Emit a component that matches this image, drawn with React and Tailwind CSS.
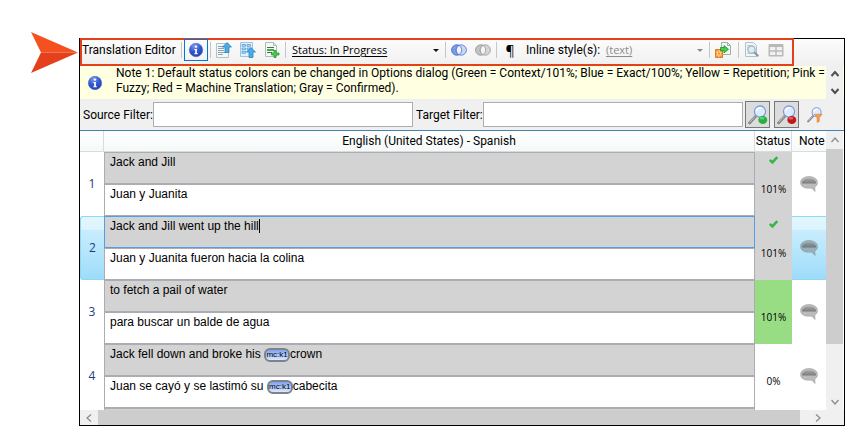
import React from "react";

const segments = [
  { id: 1, source: "Jack and Jill", target: "Juan y Juanita", score: "101%", checked: true, tone: "bg-[#d3d3d3]" },
  {
    id: 2,
    source: "Jack and Jill went up the hill",
    target: "Juan y Juanita fueron hacia la colina",
    score: "101%",
    checked: true,
    selected: true,
    tone: "bg-[#d3d3d3]",
  },
  { id: 3, source: "to fetch a pail of water", target: "para buscar un balde de agua", score: "101%", tone: "bg-[#98dd84]" },
  {
    id: 4,
    source: <>Jack fell down and broke his <Tag />crown</>,
    target: <>Juan se cayó y se lastimó su <Tag />cabecita</>,
    score: "0%",
    tone: "bg-white",
  },
];

function Tag() {
  return (
    <span className="inline-block h-[14px] w-[26px] rounded-[6px] border-2 border-[#7f8288] bg-gradient-to-b from-[#7fa5f2] to-[#dbe8ff] text-center align-middle text-[8px] leading-[10px]">
      mc:k1
    </span>
  );
}

function InfoIcon() {
  return (
    <svg className="size-4 shrink-0" viewBox="0 0 16 16" aria-hidden="true">
      <defs>
        <radialGradient id="info" cx="0.4" cy="0.2" r="0.9">
          <stop offset="0" stopColor="#7d9df0" />
          <stop offset="0.5" stopColor="#3157cf" />
          <stop offset="1" stopColor="#1b3fae" />
        </radialGradient>
      </defs>
      <circle cx="8" cy="8" r="6.7" fill="url(#info)" stroke="#4768c8" strokeWidth="0.6" />
      <circle cx="8" cy="4.6" r="1.2" fill="#fff" />
      <path d="M6.4 7h2.5v4.2h.9v1H6.3v-1h.9V8h-.8z" fill="#fff" />
    </svg>
  );
}

function UpArrow({ x, y }) {
  return (
    <path
      transform={`translate(${x} ${y})`}
      d="M4.5 0 9 4.6H6.5V10h-4V4.6H0z"
      fill="#45aee8"
      stroke="#2179b8"
      strokeWidth="0.7"
    />
  );
}

function MoveLinesIcon() {
  return (
    <svg className="size-4" viewBox="0 0 16 16" aria-hidden="true">
      <path d="M.5 1.5h12v14H.5z" fill="#f3f8f8" stroke="#b3c3c6" />
      <path d="M2 4.5h6M2 6.5h6M2 8.5h6M2 10.5h8M2 12.5h5" stroke="#8da2a9" />
      <UpArrow x={6.5} y={0.5} />
    </svg>
  );
}

function MoveBlocksIcon() {
  return (
    <svg className="size-4" viewBox="0 0 16 16" aria-hidden="true">
      <path d="M.5.5h12v14H.5z" fill="#e3f1fc" stroke="#9ec3df" />
      <path d="M2 2.5h3.5v1.8H2zM7 2.5h3.500v1.8H7zM2 6h3.5v1.8H2zM7 6h3.500v1.8H7zM2 9.5h3.5v1.8H2z" fill="#b9dcf6" stroke="#5b9dd4" strokeWidth="0.8" />
      <UpArrow x={6.5} y={5.5} />
    </svg>
  );
}

function AddPageIcon() {
  return (
    <svg className="size-4" viewBox="0 0 16 16" aria-hidden="true">
      <path d="M1.5.5h8l3 3v11h-11z" fill="#f4f9f6" stroke="#adbdb9" />
      <path d="M9.5.5v3h3" fill="#dfe9e6" stroke="#adbdb9" />
      <path d="M3 5.5h7M3 10.5h5" stroke="#4a6a56" />
      <path d="M3 8h7" stroke="#43ad52" strokeWidth="2" />
      <path d="M10 8.5h2v2.5h3v2h-3v2.5h-2V13H7.5v-2H10z" fill="#4bd44e" stroke="#178d24" strokeWidth="0.7" />
    </svg>
  );
}

function CirclesIcon({ fill, stroke, side }) {
  return (
    <svg className="h-3 w-4" viewBox="0 0 16 12" aria-hidden="true">
      <circle cx="5.8" cy="6" r="5.2" fill={fill} stroke={stroke} />
      <circle cx="10.2" cy="6" r="5.2" fill={side} stroke={stroke} strokeWidth="0.8" />
      <path d="M8 1.4a5.200 5.200 0 0 1 0 9.200 5.200 5.200 0 0 1 0-9.200z" fill="#f1f5fc" stroke={stroke} strokeWidth="0.8" />
    </svg>
  );
}

function ExportIcon() {
  return (
    <svg className="size-4" viewBox="0 0 16 16" aria-hidden="true">
      <path d="M6.5.5h6l3 3v9h-9z" fill="#f4f9f8" stroke="#9eafb0" />
      <path d="M12.5.5v3h3" fill="none" stroke="#9eafb0" />
      <path d="M.5 7.5h7v8h-7z" fill="#f7942b" stroke="#e07b1f" />
      <path d="M1 10h6M1 13h6M4 7.5V10M2.5 10v3M5.5 10v3M4 13v2.5" stroke="#fff0d0" strokeWidth="0.6" />
      <path d="M5.5 5.5H9v-2l4.5 3.7L9 11V8.7H5.5z" fill="#43cf45" stroke="#179321" strokeWidth="0.8" />
    </svg>
  );
}

function PreviewIcon() {
  return (
    <svg className="size-4" viewBox="0 0 16 16" aria-hidden="true">
      <path d="M1.5.5h8l3 3v11h-11z" fill="#f2f6f7" stroke="#b4c2c8" />
      <path d="M3 3.5h5M3 5.5h7M3 11.5h7" stroke="#c0cdd2" />
      <circle cx="7.5" cy="7.5" r="3.7" fill="#dcedf8" stroke="#9bb3c4" strokeWidth="1.2" />
      <path d="m10.3 10.3 4 4" stroke="#8296a5" strokeWidth="2" />
    </svg>
  );
}

function GridIcon() {
  return (
    <svg className="size-4" viewBox="0 0 16 16" aria-hidden="true">
      <rect x="0.5" y="2" width="15" height="12.5" rx="1" fill="#b9b9b9" />
      <path d="M2 5h5.3v3.3H2zM8.7 5H14v3.3H8.7zM2 9.7h5.3V13H2zM8.7 9.7H14V13H8.7z" fill="#f1f1f1" />
    </svg>
  );
}

function SearchIcon({ badge, size }) {
  return (
    <svg className={size} viewBox="0 0 20 20" aria-hidden="true">
      <path d="m1.5 18 6.5-7" stroke="#858585" strokeWidth="2.6" strokeLinecap="round" />
      <path d="m1.8 17.2 5.4-5.8" stroke="#d5d5d5" strokeWidth="0.8" />
      <circle cx="12" cy="6.6" r="5.6" fill="#dcebff" stroke="#7e9fdc" strokeWidth="1.3" />
      <path d="M8.5 6a3.8 3.8 0 0 1 5-3" fill="none" stroke="#fff" strokeWidth="1.6" />
      {badge === "funnel" ? (
        <path d="M9 9h10l-3.6 4.3V18l-2.8 1.4v-6z" fill="#f79a4a" stroke="#e07928" strokeWidth="0.6" />
      ) : (
        <>
          <ellipse cx="14.8" cy="15" rx="4.5" ry="4" fill={badge} />
          <ellipse cx="14" cy="13.3" rx="2.4" ry="1.2" fill="#fff" opacity="0.35" />
        </>
      )}
    </svg>
  );
}

function CommentIcon() {
  return (
    <svg className="h-4 w-[18px]" viewBox="0 0 18 16" aria-hidden="true">
      <defs>
        <linearGradient id="bubble" x1="0" y1="0" x2="0" y2="1">
          <stop offset="0" stopColor="#777" stopOpacity="0.35" />
          <stop offset="1" stopColor="#555" stopOpacity="0.65" />
        </linearGradient>
      </defs>
      <path
        d="M9 .5C14 .5 17.500 3 17.500 6.500c0 2-1 3.600-2.700 4.600l.4 4.400-3.600-3.300C5 13 .5 10.500.5 6.500.5 3 4 .5 9 .5z"
        fill="#777"
        fillOpacity="0.5"
        stroke="#777"
        strokeOpacity="0.4"
        strokeWidth="0.8"
      />
      <path d="M2 7.500C1.800 4 5 2.500 9 2.500s7.200 1.500 7 5z" fill="url(#bubble)" />
    </svg>
  );
}

function Check() {
  return (
    <svg className="h-2 w-[9px]" viewBox="0 0 9 8" aria-hidden="true">
      <path d="M.8 4 3.400 6.400 8.300 1.200" fill="none" stroke="#36b54a" strokeWidth="2.600" />
    </svg>
  );
}

function Chevron({ d, width = 1.2 }) {
  return (
    <svg className="size-[10px]" viewBox="0 0 10 10" aria-hidden="true">
      <path d={d} fill="none" stroke="currentColor" strokeWidth={width} />
    </svg>
  );
}
const UP = "M1.500 7 5 3l3.500 4";
const DOWN = "M1.500 3 5 7l3.500-4";
const LEFT = "M7 1.500 3 5l4 3.500";
const RIGHT = "m3 1.500 4 3.500-4 3.500";

function Separator() {
  return <span className="h-4 w-px shrink-0 bg-[#c6c6c6]" />;
}

function ToolButton({ label, children, className = "" }) {
  return (
    <button type="button" aria-label={label} className={`flex h-[22px] w-6 shrink-0 items-center justify-center ${className}`}>
      {children}
    </button>
  );
}

function DropDown({ id, label, value, className, caret, disabled }) {
  return (
    <div className={`relative flex shrink-0 items-center ${className}`}>
      <select
        id={id}
        aria-label={label}
        disabled={disabled}
        className="h-5 w-full appearance-none bg-transparent p-0 leading-5 underline underline-offset-2 opacity-100 outline-none"
      >
        <option>{value}</option>
      </select>
      <svg className={`pointer-events-none absolute right-0 h-[3px] w-[6px] ${caret}`} viewBox="0 0 6 3" aria-hidden="true">
        <path d="M0 0h6L3 3z" fill="currentColor" />
      </svg>
    </div>
  );
}

function Toolbar() {
  return (
    <div className="flow-root bg-gradient-to-b from-[#fcfcfc] to-[#f0f0f0]">
      <div className="-mt-px flex h-7 w-[714px] items-center whitespace-nowrap border-2 border-[#e5401c] pb-1">
        <h1 className="w-[99px] shrink-0">Translation Editor</h1>
        <Separator />
        <ToolButton label="Show notes" className="mx-[2px] border border-[#0078d7]"><InfoIcon /></ToolButton>
        <Separator />
        <ToolButton label="Move text up" className="ml-px"><MoveLinesIcon /></ToolButton>
        <ToolButton label="Move segment up"><MoveBlocksIcon /></ToolButton>
        <ToolButton label="Add to memory" className="mr-px"><AddPageIcon /></ToolButton>
        <Separator />
        <DropDown id="status" label="Segment status" value="Status: In Progress" className="mx-[6px] w-[147px] font-['Open_Sans','Noto_Sans',sans-serif] text-[11px]" caret="text-[#111]" />
        <Separator />
        <ToolButton label="Join segments" className="ml-px"><CirclesIcon fill="#7d9ce8" stroke="#4d74d0" side="#c6d8f8" /></ToolButton>
        <ToolButton label="Split segment" className="mr-px"><CirclesIcon fill="#c4c4c4" stroke="#9b9b9b" side="#d6d6d6" /></ToolButton>
        <Separator />
        <ToolButton label="Show marks" className="ml-px mr-1 font-['Open_Sans','Noto_Sans',sans-serif] text-[14px]">¶</ToolButton>
        <label htmlFor="inline" className="w-20 shrink-0">Inline style(s):</label>
        <DropDown id="inline" label="Inline style(s)" value="(text)" disabled className="mr-[6px] w-[97px] font-['Open_Sans','Noto_Sans',sans-serif] text-[11px] text-[#8c8c8c]" caret="text-[#8c8c8c]" />
        <Separator />
        <ToolButton label="Export" className="ml-px mr-[3px]"><ExportIcon /></ToolButton>
        <Separator />
        <ToolButton label="Preview" className="ml-px"><PreviewIcon /></ToolButton>
        <ToolButton label="Grid"><GridIcon /></ToolButton>
      </div>
    </div>
  );
}

function NoteBar() {
  return (
    <div className="flex h-[33px] bg-[#ffffe1]">
      <div className="flex w-9 shrink-0 items-center pl-[7px]"><InfoIcon /></div>
      <p className="min-w-0 flex-1 whitespace-nowrap leading-[15px]">
        Note 1: Default status colors can be changed in Options dialog (Green = Context/101%; Blue = Exact/100%; Yellow = Repetition; Pink =<br />
        Fuzzy; Red = Machine Translation; Gray = Confirmed).
      </p>
      <div className="mr-px flex w-[17px] shrink-0 flex-col bg-[#f0f0f0] text-[#505050]">
        <button type="button" aria-label="Previous note" className="flex flex-1 items-center justify-center"><Chevron d={UP} width={2} /></button>
        <button type="button" aria-label="Next note" className="flex flex-1 items-center justify-center"><Chevron d={DOWN} width={2} /></button>
      </div>
    </div>
  );
}

function FilterBar() {
  return (
    <div className="flex h-8 items-center border-b border-[#4383b0] bg-[#f0f0f0]">
      <label htmlFor="source" className="w-[73px] shrink-0 whitespace-nowrap pl-[3px]">Source Filter:</label>
      <input id="source" className="h-[25px] min-w-0 flex-1 border border-[#abadb3] bg-white px-1 outline-none" />
      <label htmlFor="target" className="w-[70px] shrink-0 whitespace-nowrap pl-[3px]">Target Filter:</label>
      <input id="target" className="h-[25px] min-w-0 flex-1 border border-[#abadb3] bg-white px-1 outline-none" />
      <button type="button" aria-label="Apply filter" className="ml-[2px] flex h-[27px] w-[25px] shrink-0 items-center justify-center border border-[#777] bg-[#dcdcdc]">
        <SearchIcon badge="#22b33a" size="size-5" />
      </button>
      <button type="button" aria-label="Clear filter" className="ml-1 flex h-[27px] w-[25px] shrink-0 items-center justify-center border border-[#777] bg-[#dcdcdc]">
        <SearchIcon badge="#c4161c" size="size-5" />
      </button>
      <button type="button" aria-label="Filter options" className="ml-[7px] mr-5 flex size-[18px] shrink-0 items-center justify-center">
        <SearchIcon badge="funnel" size="size-4" />
      </button>
    </div>
  );
}

const selectedCell =
  "border-y border-[#8fd8f3] bg-[linear-gradient(to_bottom,#e2f6fe_0%,#dcf4fe_20%,#c9edfd_21%,#9edcfa_100%)]";

function Segment({ id, source, target, score, checked, selected, tone }) {
  return (
    <>
      <tr className="h-8">
        <th
          rowSpan={2}
          scope="row"
          className={`p-0 text-center font-['Open_Sans','Noto_Sans',sans-serif] font-normal text-[#1f3b7c] ${selected ? selectedCell + " rounded-l-[3px] border-l" : ""}`}
        >
          {id}
        </th>
        <td className={`border p-0 pl-[5px] align-top ${selected ? "border-[#569de5]" : "border-[#abadb3]"} bg-[#d3d3d3]`}>
          <div className="h-[30px] whitespace-nowrap pt-[2px] leading-[15px]">
            {source}
            {selected && <span className="inline-block h-[14px] w-px bg-black align-[-3px]" />}
          </div>
        </td>
        <td rowSpan={2} className={`p-0 align-top font-['Open_Sans','Noto_Sans',sans-serif] text-[10px] ${tone}`}>
          <div className="flex h-16 flex-col items-center pt-1">
            <span className="flex h-2">{checked && <Check />}</span>
            <span className="pt-[18px] leading-[15px]">{score}</span>
          </div>
        </td>
        <td rowSpan={2} className={`p-0 ${selected ? selectedCell : ""}`}>
          <button type="button" aria-label={`Note for segment ${id}`} className="mx-auto flex"><CommentIcon /></button>
        </td>
      </tr>
      <tr className="h-8">
        <td className="border border-[#abadb3] bg-white p-0 pl-[5px] align-top">
          <div className="h-[30px] whitespace-nowrap pt-[2px] leading-[15px]">{target}</div>
        </td>
      </tr>
    </>
  );
}

function SegmentGrid() {
  return (
    <div className="flex">
      <table className="min-w-0 flex-1 table-fixed border-separate border-spacing-0 font-['Liberation_Sans',Arial,sans-serif]">
        <colgroup>
          <col className="w-6" />
          <col />
          <col className="w-[37px]" />
          <col className="w-[34px]" />
        </colgroup>
        <thead className="font-['Roboto','Noto_Sans',sans-serif]">
          <tr className="h-[21px] bg-gradient-to-b from-white to-[#f6f9f9] leading-[15px]">
            <th aria-label="Number" className="border-b border-r border-[#d8dcdf] p-0" />
            <th scope="col" className="border-b border-r border-[#d8dcdf] p-0 font-normal">English (United States) - Spanish</th>
            <th scope="col" className="border-b border-r border-[#d8dcdf] p-0 text-center font-normal">Status</th>
            <th scope="col" className="whitespace-nowrap border-b border-[#d8dcdf] p-0 pl-[7px] text-left font-normal">Note</th>
          </tr>
        </thead>
        <tbody>
          {segments.map((s) => <Segment key={s.id} {...s} />)}
          <tr className="h-[2px]">
            <td className="p-0" />
            <td className="border-x border-t border-[#abadb3] bg-[#d3d3d3] p-0" />
            <td className="p-0" />
            <td className="p-0" />
          </tr>
        </tbody>
      </table>
      <div className="mr-px flex w-[17px] shrink-0 flex-col bg-[#f0f0f0] text-[#8a8a8a]">
        <button type="button" aria-label="Scroll up" className="flex h-[18px] items-center justify-center"><Chevron d={UP} /></button>
        <div className="h-[195px] bg-[#cdcdcd]" />
        <button type="button" aria-label="Scroll down" className="mt-auto flex h-[17px] items-center justify-center"><Chevron d={DOWN} /></button>
      </div>
    </div>
  );
}

export default function App() {
  return (
    <main className="flex bg-white font-['Roboto','Noto_Sans',sans-serif] text-[12px] text-black">
      <aside className="w-[79px] shrink-0 pl-[31px] pt-8">
        <svg className="h-[41px] w-[47px]" viewBox="0 0 47 41" aria-hidden="true">
          <path d="M0 0 47 20.500H10z" fill="#f4511e" />
          <path d="M0 41 47 20.500H10z" fill="#e5401c" />
        </svg>
      </aside>
      <section className="mt-[38px] min-w-0 flex-1 border border-black">
        <Toolbar />
        <NoteBar />
        <FilterBar />
        <SegmentGrid />
        <div className="flex h-[15px] bg-[#f0f0f0] text-[#8a8a8a]">
          <button type="button" aria-label="Scroll left" className="flex w-[18px] items-center justify-center"><Chevron d={LEFT} /></button>
          <div className="flex-1 bg-[#cdcdcd]" />
          <button type="button" aria-label="Scroll right" className="mr-[18px] flex w-[26px] items-center justify-end pr-[3px]"><Chevron d={RIGHT} /></button>
        </div>
      </section>
    </main>
  );
}
